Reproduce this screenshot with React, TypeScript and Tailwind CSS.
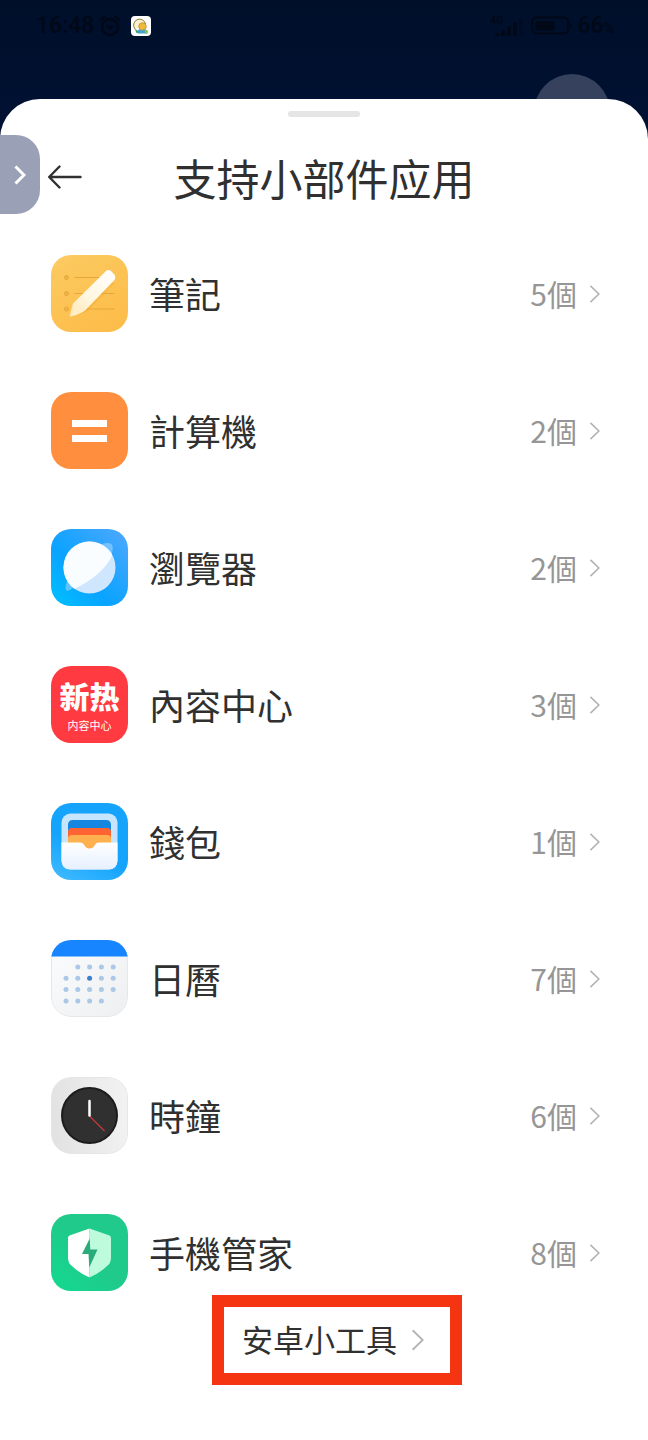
import type { ReactNode } from "react";

type WidgetApp = {
  name: string;
  count: number;
  icon: ReactNode;
};

const iconCls = "w-[77px] h-[77px] shrink-0 rounded-[20px]";

const NotesIcon = () => (
  <svg viewBox="0 0 77 77" className={iconCls} aria-hidden="true">
    <defs>
      <linearGradient id="notesBg" x1="0" y1="0" x2="0.6" y2="1">
        <stop offset="0" stopColor="#fbcb62" />
        <stop offset="1" stopColor="#fdbd4a" />
      </linearGradient>
      <linearGradient id="pencil" x1="1" y1="0" x2="0" y2="1">
        <stop offset="0" stopColor="#ffffff" />
        <stop offset="0.6" stopColor="#fff6df" />
        <stop offset="1" stopColor="#ffe7b0" />
      </linearGradient>
    </defs>
    <rect width="77" height="77" fill="url(#notesBg)" />
    <g stroke="#e5a73a" strokeWidth="1" fill="#f0b444">
      <circle cx="15.500" cy="22.500" r="2" />
      <circle cx="15.500" cy="38.500" r="2" />
      <circle cx="15.500" cy="54" r="2" />
      <path d="M23.500 22.500H50M23.500 38.500H63.500M23.500 54H63.500" />
    </g>
    <path d="M22 62L36 57L63 29L60 25Z" fill="#eda52e" opacity="0.3" />
    <path d="M19.500 61.500C18.600 61.300 18.700 60.500 19 59.500L22 48.500L54.500 16.500Q57 14 60 16L63.300 19.500Q65.500 22.500 63 25.500L35 54.500Q30 59 19.500 61.500Z" fill="url(#pencil)" />
    <path d="M22 48.500Q24 54 19.500 61.500Q30 59 35 54.500Q28 49 22 48.500Z" fill="#ffefc9" opacity="0.6" />
  </svg>
);

const CalculatorIcon = () => (
  <svg viewBox="0 0 77 77" className={iconCls} aria-hidden="true">
    <rect width="77" height="77" fill="#ff8f3e" />
    <rect x="21" y="28" width="35" height="7" rx="0.500" fill="#fff" />
    <rect x="21" y="43" width="35" height="7" rx="0.500" fill="#fff" />
  </svg>
);

const BrowserIcon = () => (
  <svg viewBox="0 0 77 77" className={iconCls} aria-hidden="true">
    <defs>
      <linearGradient id="browserBg" x1="0" y1="1" x2="1" y2="0">
        <stop offset="0" stopColor="#00c2ff" />
        <stop offset="0.4" stopColor="#0aa3ff" />
        <stop offset="1" stopColor="#50a8ff" />
      </linearGradient>
      <clipPath id="globe">
        <circle cx="38.500" cy="38.500" r="26" />
      </clipPath>
    </defs>
    <rect width="77" height="77" fill="url(#browserBg)" />
    <path d="M46 17Q57 12 61 15.500Q64 20 57 33L22 59Q17 63 15 61Q13 58 18 48Z" fill="#a8d8ff" opacity="0.55" />
    <circle cx="38.500" cy="38.500" r="26" fill="#cfe6ff" />
    <path d="M0 0H77L61 27Q51 47 21 61L0 77Z" fill="#fafdff" clipPath="url(#globe)" />
  </svg>
);

const ContentIcon = () => (
  <span className="w-[77px] h-[77px] shrink-0 rounded-[20px] pt-1 bg-[#ff3a40] text-white flex flex-col items-center justify-center gap-1 font-['Noto_Sans_CJK_SC',sans-serif]">
    <span className="text-[30px] leading-8 font-black">新热</span>
    <span className="text-[11px] leading-5">内容中心</span>
  </span>
);

const WalletIcon = () => (
  <svg viewBox="0 0 77 77" className={iconCls} aria-hidden="true">
    <defs>
      <linearGradient id="walletBg" x1="0" y1="1" x2="0.5" y2="0">
        <stop offset="0" stopColor="#43bcff" />
        <stop offset="0.5" stopColor="#14a4fc" />
        <stop offset="1" stopColor="#16a3fb" />
      </linearGradient>
      <linearGradient id="pocket" x1="0" y1="0" x2="0" y2="1">
        <stop offset="0" stopColor="#ffffff" />
        <stop offset="1" stopColor="#e6f0ff" />
      </linearGradient>
      <clipPath id="slot">
        <path d="M17 50V22Q17 17 22 17H55Q60 17 60 22V50Z" />
      </clipPath>
    </defs>
    <rect width="77" height="77" fill="url(#walletBg)" />
    <rect x="10.500" y="10.500" width="56" height="56" rx="9" fill="#c6e6ff" />
    <g clipPath="url(#slot)">
      <rect x="17" y="17" width="43" height="33" fill="#1687e0" />
      <rect x="17" y="25" width="43" height="20" rx="4" fill="#ff6532" />
      <rect x="17" y="32" width="43" height="20" rx="4" fill="#ffb14f" />
    </g>
    <path d="M10.500 39.500H29Q32 39.500 33.500 42.500Q35 45.500 38.500 45.500Q42 45.500 43.500 42.500Q45 39.500 48 39.500H66.500V57.500Q66.500 66.500 57.500 66.500H19.500Q10.500 66.500 10.500 57.500Z" fill="url(#pocket)" />
  </svg>
);

// first row starts on the second column, last row stops at the fourth
const calendarDots = [
  [1, 0], [2, 0], [3, 0], [4, 0],
  [0, 1], [1, 1], [2, 1], [3, 1], [4, 1],
  [0, 2], [1, 2], [2, 2], [3, 2], [4, 2],
  [0, 3], [1, 3], [2, 3], [3, 3],
];

const CalendarIcon = () => (
  <svg viewBox="0 0 77 77" className={iconCls} aria-hidden="true">
    <defs>
      <linearGradient id="calBg" x1="0" y1="0" x2="1" y2="1">
        <stop offset="0" stopColor="#fbfcfd" />
        <stop offset="1" stopColor="#eeeff1" />
      </linearGradient>
    </defs>
    <rect x="0.500" y="0.500" width="76" height="76" rx="19.500" fill="url(#calBg)" stroke="#e6e7e9" />
    <path d="M0 0H77V16.500H0Z" fill="#1785ff" />
    {calendarDots.map(([col, row]) => (
      <circle
        key={`${col}-${row}`}
        cx={15 + col * 11.8}
        cy={27 + row * 11.3}
        r="2.500"
        fill={col === 2 && row === 1 ? "#3c7fcb" : "#abc8e8"}
      />
    ))}
  </svg>
);

const ClockIcon = () => (
  <svg viewBox="0 0 77 77" className={iconCls} aria-hidden="true">
    <defs>
      <linearGradient id="clockBg" x1="0" y1="0.500" x2="1" y2="0.400">
        <stop offset="0" stopColor="#e2e2e2" />
        <stop offset="1" stopColor="#f2f2f2" />
      </linearGradient>
    </defs>
    <rect x="0.500" y="0.500" width="76" height="76" rx="19.500" fill="url(#clockBg)" stroke="#e6e6e6" />
    <circle cx="38.500" cy="38.500" r="27.500" fill="#303030" stroke="#1c1c1c" strokeWidth="2" />
    <path d="M38.500 39L53.500 54" stroke="#c23a3a" strokeWidth="1.200" />
    <path d="M38.500 24V38.500" stroke="#fff" strokeWidth="2.500" strokeLinecap="round" />
  </svg>
);

const SecurityIcon = () => (
  <svg viewBox="0 0 77 77" className={iconCls} aria-hidden="true">
    <defs>
      <linearGradient id="secBg" x1="0" y1="1" x2="1" y2="0">
        <stop offset="0" stopColor="#13d98f" />
        <stop offset="0.5" stopColor="#1fca8b" />
        <stop offset="1" stopColor="#21ca8c" />
      </linearGradient>
    </defs>
    <rect width="77" height="77" fill="url(#secBg)" />
    <path d="M38.500 14.500L18.500 21.500Q17 22 17 24V44Q17 49 21 52Q28 59 38.500 63.500Z" fill="#fff" />
    <path d="M38.500 14.500L58.500 21.500Q60 22 60 24V44Q60 49 56 52Q49 59 38.500 63.500Z" fill="#bdfbdc" />
    <path d="M38.700 24.500L31 40H37.500L38.300 53.500L46.500 35.500H39.300Z" fill="#2aab79" />
  </svg>
);

const apps: WidgetApp[] = [
  { name: "筆記", count: 5, icon: <NotesIcon /> },
  { name: "計算機", count: 2, icon: <CalculatorIcon /> },
  { name: "瀏覽器", count: 2, icon: <BrowserIcon /> },
  { name: "內容中心", count: 3, icon: <ContentIcon /> },
  { name: "錢包", count: 1, icon: <WalletIcon /> },
  { name: "日曆", count: 7, icon: <CalendarIcon /> },
  { name: "時鐘", count: 6, icon: <ClockIcon /> },
  { name: "手機管家", count: 8, icon: <SecurityIcon /> },
];

const StatusBar = () => (
  <div className="flex items-center justify-between h-[52px] pl-9 pr-[34px] text-[#010817] font-[Roboto,sans-serif]">
    <div className="flex items-center">
      <span className="text-[23px] font-medium">16:48</span>
      <svg viewBox="0 0 22 22" className="w-[22px] h-[22px] ml-[5px]" fill="none" stroke="currentColor" strokeWidth="2.400" strokeLinecap="round" aria-hidden="true">
        <circle cx="11" cy="12" r="8" />
        <path d="M2 4.500L5.500 1.800M20 4.500L16.500 1.800M8.500 11L11 13.500L13.500 11" />
      </svg>
      <svg viewBox="0 0 20 20" className="w-5 h-5 ml-[10px]" aria-hidden="true">
        <rect width="20" height="20" rx="4" fill="#fff" />
        <path d="M4 13A6 6 0 1 1 14.500 8" fill="#fbf3cf" stroke="#8e7a35" strokeWidth="1" />
        <circle cx="11.500" cy="10.500" r="3.800" fill="#f1b93c" stroke="#b5872a" strokeWidth="0.700" />
        <path d="M3.500 12.500L7 15V17H5.500Z" fill="#38a05a" />
        <path d="M6.500 14.500Q9 12.500 11 14.500Q13 12.500 16.500 14.500V17.500H7Z" fill="#4a9fc9" />
        <path d="M13.500 13.500L16.500 14.500V17.500H14Z" fill="#8bbf4e" />
      </svg>
    </div>
    <div className="flex items-center">
      <div className="flex items-end">
        <span className="self-start -mr-2 text-[11px] leading-3 font-bold">4G</span>
        <svg viewBox="0 0 28 22" className="w-7 h-[22px]" fill="currentColor" aria-hidden="true">
          <rect x="0" y="18" width="4" height="3" rx="1" />
          <rect x="6" y="15" width="4" height="6" rx="1" />
          <rect x="12" y="11" width="4" height="10" rx="1" />
          <rect x="18" y="7" width="4" height="14" rx="1" />
          <rect x="24" y="3" width="4" height="18" rx="1" opacity="0.3" />
        </svg>
      </div>
      <svg viewBox="0 0 42 20" className="w-[42px] h-5 ml-2" aria-hidden="true">
        <rect x="1.200" y="1.500" width="36" height="16" rx="4.500" fill="none" stroke="currentColor" strokeWidth="2.200" />
        <rect x="4.500" y="5" width="19" height="9.500" rx="1" fill="currentColor" />
        <path d="M39.500 7Q42 9.500 39.500 12.500Z" fill="currentColor" />
      </svg>
      <span className="ml-1 text-[23px] font-medium">
        66<span className="text-sm font-bold">%</span>
      </span>
    </div>
  </div>
);

const Chevron = ({ className }: { className: string }) => (
  <svg viewBox="0 0 12 20" className={className} fill="none" stroke="#b4b4b4" strokeWidth="1.800" aria-hidden="true">
    <path d="M1.500 1L10.800 10L1.500 19" />
  </svg>
);

export default function App() {
  return (
    <div className="relative flex flex-col min-h-screen overflow-hidden bg-[#00112f] bg-linear-to-b from-[#000f29] to-[#001134] to-10% text-[#303030] font-['Noto_Sans_CJK_TC',sans-serif]">
      <div className="absolute top-[74px] right-[38px] w-[76px] h-[76px] rounded-full bg-[#36415e]" />
      <StatusBar />

      <main className="relative flex-1 flex flex-col mt-[47px] pb-9 rounded-t-[40px] bg-white">
        <div className="w-[72px] h-[6px] mt-3 mx-auto rounded-full bg-[#e5e5e5]" />

        <button aria-label="展開側邊欄" className="absolute left-0 top-9 w-10 h-[79px] rounded-r-3xl bg-[#9aa0b5] flex items-center justify-center">
          <svg viewBox="0 0 12 20" className="w-3 h-5" fill="none" stroke="#fff" strokeWidth="3" aria-hidden="true">
            <path d="M1.500 1.500L10 10L1.500 18.500" />
          </svg>
        </button>

        <header className="grid grid-cols-[1fr_auto_1fr] items-center mt-7 px-12">
          <button aria-label="返回" className="w-[34px]">
            <svg viewBox="0 0 34 24" className="w-[34px] h-6" fill="none" stroke="#303030" strokeWidth="2.400" strokeLinecap="round" strokeLinejoin="round" aria-hidden="true">
              <path d="M32.500 12H1.500M11.500 1.500L1.200 12L11.500 22.500" />
            </svg>
          </button>
          <h1 className="text-[43px] leading-[64px] font-['Noto_Sans_CJK_SC',sans-serif]">支持小部件应用</h1>
        </header>

        <ul className="flex flex-col gap-[60px] mt-[46px]">
          {apps.map((app) => (
            <li key={app.name}>
              <button className="w-full flex items-center pl-[51px] pr-12 text-left">
                {app.icon}
                <span className="flex-1 ml-[21px] pb-[2px] text-4xl">{app.name}</span>
                <span className="pb-[2px] text-[30px] leading-10 text-[#969696]">{app.count}個</span>
                <Chevron className="w-[11px] h-[18px] ml-3" />
              </button>
            </li>
          ))}
        </ul>

        <div className="flex justify-center mt-1 pl-[26px]">
          <button className="flex items-center h-[90px] pl-[18px] pr-[26px] border-12 border-[#f53411]">
            <span className="pb-[2px] text-[31px] leading-10 font-['Noto_Sans_CJK_SC',sans-serif]">安卓小工具</span>
            <Chevron className="w-[13px] h-6 ml-[14px]" />
          </button>
        </div>
      </main>
    </div>
  );
}
